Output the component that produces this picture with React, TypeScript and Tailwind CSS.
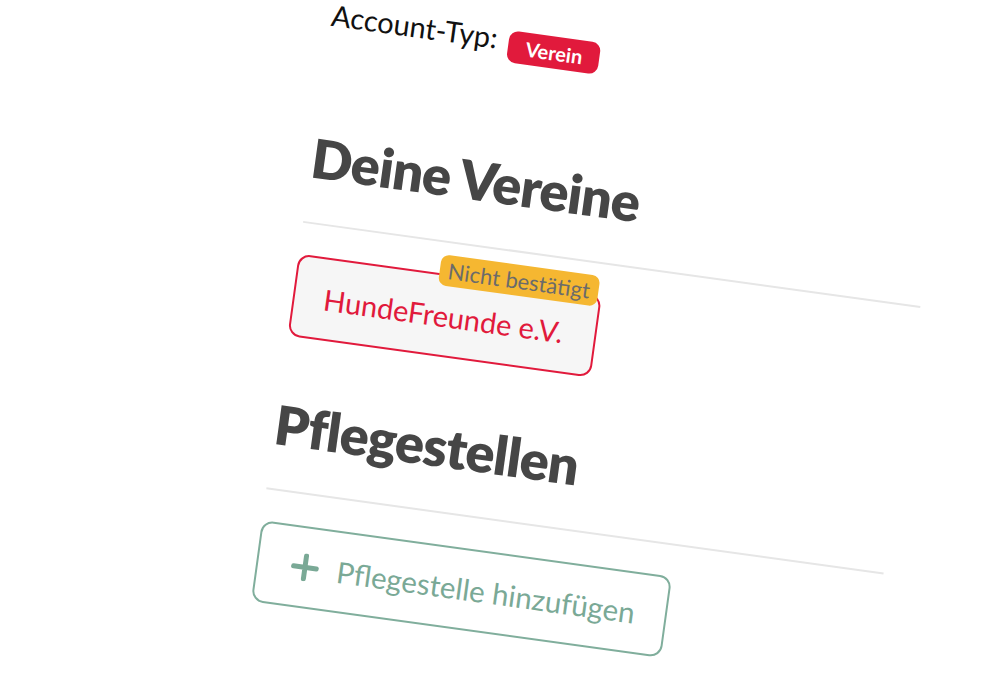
const font = { fontFamily: 'Lato, "Open Sans", sans-serif' }

function PlusIcon() {
  return (
    <svg width="28" height="28" viewBox="0 0 28 28" fill="none" stroke="currentColor" strokeWidth="5" strokeLinecap="round">
      <path d="M14 2.5v23M2.5 14h23" />
    </svg>
  )
}

export default function App() {
  return (
    <div className="w-[1000px] h-[688px] overflow-hidden bg-white" style={font}>
      <div className="pl-[334px]">
        {/* whole panel is tilted */}
        <div className="w-[623px] origin-top-left rotate-[7.85deg] -mt-[2px]">
          <div className="flex items-start gap-[12px]">
            <span className="text-[29px] leading-[34px] text-[#111]">Account-Typ:</span>
            <span className="mt-[8px] flex h-[32px] w-[92px] items-center justify-center rounded-[9px] bg-[#e11a3c] text-[20px] font-bold text-white">
              Verein
            </span>
          </div>

          <h1 className="mt-[93px] text-[54px] leading-[56px] font-extrabold tracking-[-0.015em] text-[#464646]">Deine Vereine</h1>
          <div className="mt-[36px] h-[2px] bg-[#e6e6e6]" />

          <div className="relative mt-[31px] flex h-[83px] w-[306px] items-center rounded-[12px] border-2 border-[#e11a3c] bg-[#f6f6f6] pl-[29px]">
            <span className="text-[29px] text-[#e11a3c]">HundeFreunde e.V.</span>
            <span className="absolute -top-[21px] right-[2px] flex h-[31px] w-[160px] items-center justify-center rounded-[8px] bg-[#f5b731] text-[22px] text-[#6b6b6b]">
              Nicht bestätigt
            </span>
          </div>

          <h2 className="mt-[61px] text-[54px] leading-[56px] font-extrabold tracking-[-0.015em] text-[#464646]">Pflegestellen</h2>
          <div className="mt-[36px] h-[2px] bg-[#e6e6e6]" />

          <button className="mt-[31px] flex h-[82px] w-[414px] items-center gap-[18px] rounded-[12px] border-2 border-[#80ae9c] pl-[33px] text-[#7aa996]">
            <PlusIcon />
            <span className="text-[29.5px]">Pflegestelle hinzufügen</span>
          </button>
        </div>
      </div>
    </div>
  )
}
